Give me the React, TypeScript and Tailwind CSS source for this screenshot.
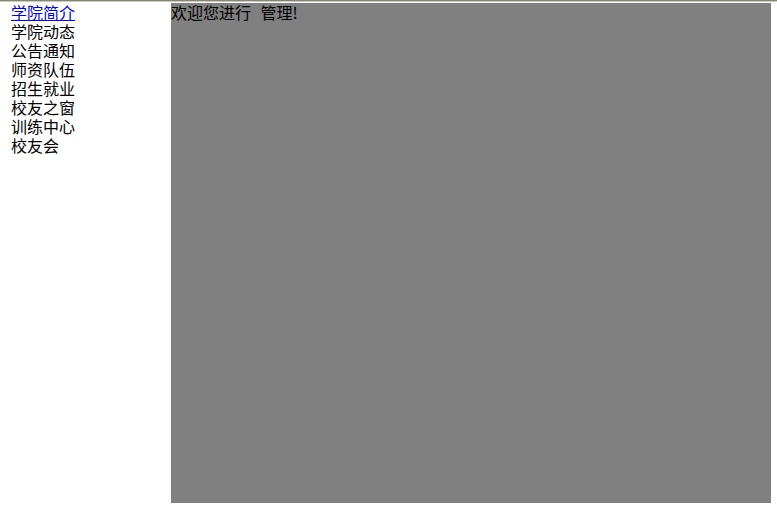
const links = ["学院简介", "学院动态", "公告通知", "师资队伍", "招生就业", "校友之窗", "训练中心", "校友会"];

export default function App() {
  return (
    <div
      className="w-[777px] h-[507px] bg-white overflow-hidden text-black"
      style={{ fontFamily: '"Noto Sans CJK SC", "Noto Sans", sans-serif' }}
    >
      <div className="h-px bg-[#84847c]" />
      <div className="h-px bg-[#cfccb8]" />
      <div className="flex pt-px">
        <ul className="w-[171px] pl-[11px] text-[16px] leading-[19px]">
          {links.map((l, i) => (
            <li key={l}>
              {i === 0 ? (
                <a href="#" className="text-[#0000ee] underline">
                  {l}
                </a>
              ) : (
                <span>{l}</span>
              )}
            </li>
          ))}
        </ul>
        <div className="w-[600px] h-[500px] bg-[#808080] text-[16px] leading-[19px] [word-spacing:6px]">
          欢迎您进行 管理!
        </div>
      </div>
    </div>
  );
}
